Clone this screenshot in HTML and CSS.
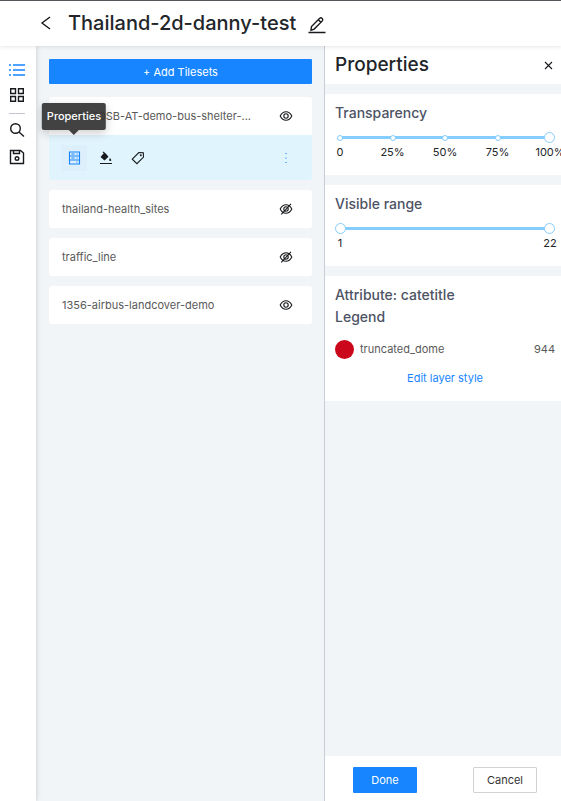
FILE: index.html
```html
<!DOCTYPE html>
<html lang="en">
<head>
<meta charset="utf-8">
<meta name="viewport" content="width=device-width, initial-scale=1">
<title>Thailand-2d-danny-test</title>
<link rel="stylesheet" href="styles.css">
</head>
<body>
<svg class="defs" aria-hidden="true">
  <symbol id="eye" viewBox="0 0 14 14"><path d="M1.200 7C2.600 4.200 4.600 2.800 7 2.800S11.400 4.200 12.800 7C11.400 9.800 9.400 11.200 7 11.200S2.600 9.800 1.200 7Z"/><circle cx="7" cy="7" r="2.200"/></symbol>
  <symbol id="eye-off" viewBox="0 0 14 14"><path d="M1.200 7C2.600 4.200 4.600 2.800 7 2.800S11.400 4.200 12.800 7C11.400 9.800 9.400 11.200 7 11.200S2.600 9.800 1.200 7Z"/><circle cx="7" cy="7" r="2.200"/><path d="M2.300 12.300 12 1.800"/></symbol>
</svg>
<div class="app">
  <header class="topbar">
    <button class="icon-btn back" aria-label="Back"><svg width="12" height="14" viewBox="0 0 12 14"><path d="M10 1 2 7l8 6"/></svg></button>
    <h1>Thailand-2d-danny-test</h1>
    <button class="icon-btn edit" aria-label="Rename"><svg width="18" height="18" viewBox="0 0 18 18"><path d="M3 14.200 3.500 10.500 11.700 2.300Q13 1.300 14.200 2.400T14.300 4.900L6.200 13.100ZM10.300 3.800l2.500 2.500M.5 16.500h17"/></svg></button>
  </header>
  <div class="workspace">
    <nav class="rail">
      <button class="icon-btn active" aria-label="Layers"><svg width="16" height="14" viewBox="0 0 16 14"><path d="M4 2h12M4 7h12M4 12h12M0 2h2M0 7h2M0 12h2"/></svg></button>
      <button class="icon-btn" aria-label="Grid"><svg width="14" height="14" viewBox="0 0 14 14"><path d="M.7.7h4.800v4.800H.7zM8.500.7h4.800v4.800H8.500zM.7 8.500h4.800v4.800H.7zM8.500 8.500h4.800v4.800H8.500z"/></svg></button>
      <span class="divider"></span>
      <button class="icon-btn" aria-label="Search"><svg width="16" height="16" viewBox="0 0 16 16"><circle cx="6.500" cy="6.500" r="4.800"/><path d="m10 10 5 4.500"/></svg></button>
      <button class="icon-btn" aria-label="Save"><svg width="16" height="16" viewBox="0 0 16 16"><path d="M1.500 1.500h10L14.500 4v10.500h-13ZM4.500 1.500v3h6v-3"/><circle cx="8" cy="9.500" r="1.800"/></svg></button>
    </nav>
    <main class="layers">
      <button class="primary add">+ Add Tilesets</button>
      <article class="card">
        <div class="row"><span class="name">2021-00SB-AT-demo-bus-shelter-...</span><button class="icon-btn" aria-label="Hide layer"><svg width="14" height="14"><use href="#eye"/></svg></button></div>
        <div class="tools">
          <div class="tool-wrap">
            <button class="icon-btn tool selected" aria-label="Layer properties" aria-describedby="tip"><svg width="13" height="14" viewBox="0 0 13 14"><path d="M1.500 1h10v12h-10ZM1.500 5h10M1.500 9h10M3.500 3h3M3.500 7h3M8.500 3h1M8.500 7h1M8.500 11h1"/></svg></button>
            <span class="tooltip" role="tooltip" id="tip">Properties</span>
          </div>
          <button class="icon-btn tool" aria-label="Fill"><svg width="14" height="14" viewBox="0 0 14 14"><path class="solid" d="M5.500 1.500 9.500 5.800 5.500 9.500 1.500 6ZM11 7q2.400 3 .3 3T11 7Z"/><path d="m4 .8 4 4.200M1 12.500h12"/></svg></button>
          <button class="icon-btn tool" aria-label="Label"><svg width="14" height="14" viewBox="0 0 14 14"><path d="M1.300 8.200 7.800 1.600 12.300 1.700 12.500 6.100 5.900 12.700Z"/><circle class="solid" cx="9.800" cy="4.300" r="1"/></svg></button>
          <button class="icon-btn more" aria-label="More"><svg width="14" height="14" viewBox="0 0 14 14"><path d="M6.300 2.500h1.400M6.300 7h1.400M6.300 11.500h1.400"/></svg></button>
        </div>
      </article>
      <article class="card"><div class="row"><span class="name">thailand-health_sites</span><button class="icon-btn" aria-label="Show layer"><svg width="14" height="14"><use href="#eye-off"/></svg></button></div></article>
      <article class="card"><div class="row"><span class="name">traffic_line</span><button class="icon-btn" aria-label="Show layer"><svg width="14" height="14"><use href="#eye-off"/></svg></button></div></article>
      <article class="card"><div class="row"><span class="name">1356-airbus-landcover-demo</span><button class="icon-btn" aria-label="Hide layer"><svg width="14" height="14"><use href="#eye"/></svg></button></div></article>
    </main>
    <aside class="panel">
      <div class="panel-head"><h2>Properties</h2><button class="icon-btn" aria-label="Close"><svg width="9" height="9" viewBox="0 0 9 9"><path d="m1 1 7 7M8 1 1 8"/></svg></button></div>
      <div class="sections">
        <section>
          <h3><label for="opacity">Transparency</label></h3>
          <div class="slider">
            <input id="opacity" type="range" min="0" max="100" value="100">
            <div class="dots"><i></i><i></i><i></i><i></i><i class="end"></i></div>
          </div>
          <div class="marks"><span>0</span><span>25%</span><span>50%</span><span>75%</span><span>100%</span></div>
        </section>
        <section>
          <h3>Visible range</h3>
          <div class="slider">
            <input type="range" min="1" max="22" value="1" aria-label="Minimum visible level">
            <input type="range" min="1" max="22" value="22" class="overlay" aria-label="Maximum visible level">
          </div>
          <div class="marks"><span>1</span><span>22</span></div>
        </section>
        <section class="legend">
          <h3>Attribute: catetitle</h3>
          <h3>Legend</h3>
          <div class="legend-row"><span class="swatch"></span><span>truncated_dome</span><span class="count">944</span></div>
          <a href="#style">Edit layer style</a>
        </section>
      </div>
      <footer><button class="primary">Done</button><button class="secondary">Cancel</button></footer>
    </aside>
  </div>
</div>
</body>
</html>
```
FILE: styles.css
```css
* { box-sizing: border-box; }
body { margin: 0; font: 11px/16px Inter, "Liberation Sans", sans-serif; color: #222529; background: #fff; }
h1, h2, h3 { margin: 0; font-weight: 500; }
button { font: inherit; padding: 0; border: 0; cursor: pointer; }
svg { display: block; fill: none; stroke: currentColor; stroke-width: 1.1; }
.solid { fill: currentColor; stroke: none; }
.defs { position: absolute; width: 0; height: 0; }
.icon-btn { display: flex; align-items: center; justify-content: center; background: none; color: #17191c; }
.app { display: flex; flex-direction: column; height: 100vh; overflow: hidden; }
.topbar { display: flex; align-items: center; height: 46px; flex: none; padding: 0 40px 2px; border-top: 1px solid #56545a; background: #fff; box-shadow: 0 1px 4px #0000001a; z-index: 2; }
.topbar svg { stroke-width: 1.4; }
.topbar h1 { margin: 0 12px 0 16px; font-size: 20px; line-height: 28px; }
.edit { margin-top: 4px; }
.workspace { display: grid; grid-template-columns: 36px minmax(0, 96fr) minmax(0, 79fr); flex: 1; min-height: 0; background: #f1f5f8; }
.rail { display: flex; flex-direction: column; align-items: center; gap: 11px; padding: 17px 2px 0 0; background: #fff; box-shadow: 0 0 5px #00000030; z-index: 1; }
.rail svg { stroke-width: 1.4; }
.rail .active { color: #1684ff; }
.divider { width: 16px; height: 1px; margin-bottom: -3px; background: #c4c6d4; }
.layers { display: flex; flex-direction: column; gap: 10px; padding: 13px 12px 13px 13px; }
.primary { background: #1785ff; color: #fff; border-radius: 1px; }
.add { height: 25px; margin-bottom: 3px; }
.card { border-radius: 3px; background: #fff; }
.row { display: flex; align-items: center; justify-content: space-between; height: 38px; padding: 0 19px 0 13px; color: #595959; }
.name { white-space: nowrap; }
.tools { display: flex; align-items: center; gap: 6px; height: 45px; padding: 0 19px 0 12px; border-radius: 0 0 3px 3px; background: #e0f4fe; }
.tool { width: 26px; height: 26px; }
.selected { background: #dceffa; color: #1785ff; }
.more { margin-left: auto; color: #4299ff; }
.tool-wrap { position: relative; }
.tooltip { position: absolute; left: 50%; bottom: 41px; transform: translateX(-50%); padding: 5px 5px 6px; border-radius: 2px; background: #363636f0; color: #fff; font-weight: 500; box-shadow: 0 3px 10px #0003; }
.tooltip::after { content: ""; position: absolute; top: 100%; left: 50%; margin-left: -5px; border: 5px solid transparent; border-top-color: #363636f0; border-bottom: 0; }
.panel { display: flex; flex-direction: column; min-width: 0; border-left: 1px solid #c9cdd6; overflow: hidden; }
.panel-head { display: flex; align-items: center; justify-content: space-between; height: 38px; padding: 0 8px 0 10px; background: #fff; }
.panel-head h2 { font-size: 19px; line-height: 24px; }
.sections { display: flex; flex-direction: column; gap: 10px; padding-top: 10px; flex: 1; }
section { padding: 8px 6px 15px 10px; background: #fff; }
h3 { font-size: 14px; line-height: 22px; color: #4c5365; }
.slider { display: grid; align-items: center; margin-top: 8px; }
.slider > * { grid-area: 1 / 1; }
input { appearance: none; width: 100%; height: 11px; margin: 0; background: linear-gradient(#85cdfc, #85cdfc) center / calc(100% - 11px) 3px no-repeat; }
input::-webkit-slider-thumb { appearance: none; width: 11px; height: 11px; border: 1px solid #85cdfc; border-radius: 50%; background: #fff; pointer-events: auto; }
.overlay { background: none; pointer-events: none; }
.dots, .marks { display: flex; justify-content: space-between; padding: 0 5px; pointer-events: none; }
.dots i { width: 6px; height: 6px; margin: 0 -3px; border: 1px solid #85cdfc; border-radius: 50%; background: #fff; }
.dots .end { visibility: hidden; }
.marks { margin-top: 1px; }
.marks span { display: flex; justify-content: center; width: 0; }
.legend { display: flex; flex-direction: column; }
.legend-row { display: flex; align-items: center; gap: 6px; height: 20px; margin-top: 11px; color: #595959; }
.swatch { width: 19px; height: 19px; border-radius: 50%; background: #cb071b; }
.count { margin-left: auto; }
a { align-self: center; margin-top: 11px; color: #1785ff; text-decoration: none; }
footer { display: flex; align-items: center; justify-content: space-between; height: 45px; padding: 2px 24px 0 28px; background: #fff; }
footer button { width: 64px; height: 26px; }
.secondary { border: 1px solid #d2d2d2; border-radius: 1px; background: #fff; color: #333; }
```
